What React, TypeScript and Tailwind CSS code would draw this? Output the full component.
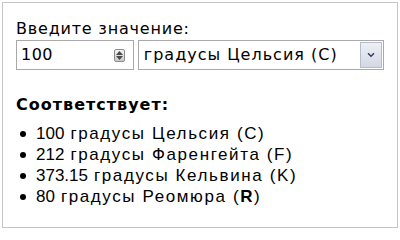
import { ChevronDown } from "lucide-react";

const results = [
  { value: "100", unit: "градусы Цельсия", sign: "C" },
  { value: "212", unit: "градусы Фаренгейта", sign: "F" },
  { value: "373.15", unit: "градусы Кельвина", sign: "K" },
  { value: "80", unit: "градусы Реомюра", sign: "R", bold: true },
];

function Spinner() {
  return (
    <div className="flex h-[13px] w-[11px] flex-col items-center justify-center gap-[1px] rounded-[2px] border border-[#8d8d8d] bg-gradient-to-b from-[#f4f4f4] to-[#c9c9c9]">
      <svg width="7" height="4" viewBox="0 0 7 4">
        <path d="M0 4 L3.5 0 L7 4 Z" fill="#4a4a4a" />
      </svg>
      <svg width="7" height="4" viewBox="0 0 7 4">
        <path d="M0 0 L3.5 4 L7 0 Z" fill="#4a4a4a" />
      </svg>
    </div>
  );
}

export default function App() {
  return (
    <div className="h-[229px] w-[400px] bg-white p-[2px] font-['DejaVu_Sans',sans-serif] text-black">
      <div className="h-[226px] w-[396px] border border-[#c4c4c4] px-[13px] pt-[15px]">
        <p className="text-[16px] leading-[22px] tracking-[0.8px]">Введите значение:</p>

        <div className="flex gap-[4px]">
          <div className="flex h-[30px] w-[119px] items-center justify-between border border-[#a9a9a9] pl-[4px] pr-[8px]">
            <span className="text-[16px] tracking-[0.5px]">100</span>
            <Spinner />
          </div>
          <div className="flex h-[30px] w-[249px] items-center justify-between border border-[#a9a9a9] pl-[5px] pr-[1px]">
            <span className="text-[16px] tracking-[1px]">градусы Цельсия (C)</span>
            <div className="flex h-[26px] w-[22px] items-center justify-center border border-[#b5bccb] bg-gradient-to-b from-[#eef0f6] to-[#d3d8e4]">
              <ChevronDown className="h-[10px] w-[10px] text-[#3b4460]" strokeWidth={4} />
            </div>
          </div>
        </div>

        <p className="mt-[26px] text-[16px] font-bold leading-[18px] tracking-[1px]">Соответствует:</p>

        <ul className="mt-[9px] font-['Liberation_Sans',Arial,sans-serif] text-[17px] leading-[21px]">
          {results.map((r) => (
            <li key={r.sign} className="flex items-center">
              <span className="ml-[4px] mr-[10px] h-[6px] w-[6px] rounded-full bg-black" />
              <span>{r.value}</span>
              <span className="ml-[6px] tracking-[1.6px]">
                {r.unit} ({r.bold ? <b>{r.sign}</b> : r.sign})
              </span>
            </li>
          ))}
        </ul>
      </div>
    </div>
  );
}
